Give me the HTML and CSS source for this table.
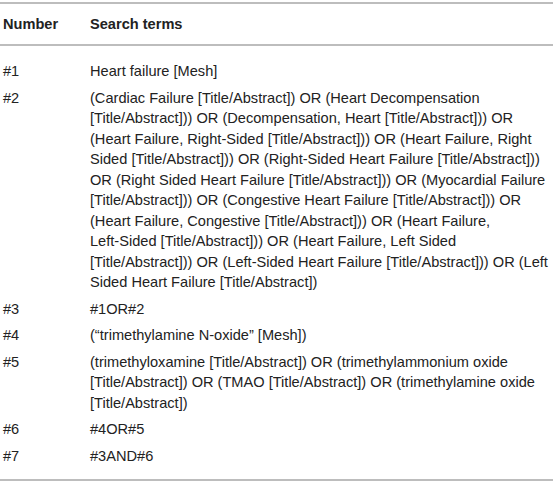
FILE: index.html
```html
<!DOCTYPE html>
<html>
<head>
<meta charset="utf-8">
<link rel="stylesheet" href="styles.css">
</head>
<body>
<div class="wrap">
<table class="terms">
<colgroup><col class="c-num"><col class="c-term"></colgroup>
<thead>
<tr><th>Number</th><th>Search terms</th></tr>
</thead>
<tbody>
<tr class="first"><td>#1</td><td>Heart failure [Mesh]</td></tr>
<tr><td>#2</td><td>(Cardiac Failure [Title/Abstract]) OR (Heart Decompensation<br>[Title/Abstract])) OR (Decompensation, Heart [Title/Abstract])) OR<br>(Heart Failure, Right-Sided [Title/Abstract])) OR (Heart Failure, Right<br>Sided [Title/Abstract])) OR (Right-Sided Heart Failure [Title/Abstract]))<br>OR (Right Sided Heart Failure [Title/Abstract])) OR (Myocardial Failure<br>[Title/Abstract])) OR (Congestive Heart Failure [Title/Abstract])) OR<br>(Heart Failure, Congestive [Title/Abstract])) OR (Heart Failure,<br>Left-Sided [Title/Abstract])) OR (Heart Failure, Left Sided<br>[Title/Abstract])) OR (Left-Sided Heart Failure [Title/Abstract])) OR (Left<br>Sided Heart Failure [Title/Abstract])</td></tr>
<tr><td>#3</td><td>#1OR#2</td></tr>
<tr><td>#4</td><td>(“trimethylamine N-oxide” [Mesh])</td></tr>
<tr><td>#5</td><td>(trimethyloxamine [Title/Abstract]) OR (trimethylammonium oxide<br>[Title/Abstract]) OR (TMAO [Title/Abstract]) OR (trimethylamine oxide<br>[Title/Abstract])</td></tr>
<tr><td>#6</td><td>#4OR#5</td></tr>
<tr class="last"><td>#7</td><td>#3AND#6</td></tr>
</tbody>
</table>
</div>
</body>
</html>
```

FILE: styles.css
```css
html, body {
  margin: 0;
  padding: 0;
  background: #ffffff;
}
.wrap {
  padding-top: 2px;
}
.terms {
  width: 553px;
  border-collapse: collapse;
  table-layout: fixed;
  font-family: "Liberation Sans", Arial, sans-serif;
  font-size: 14.6px;
  color: #222222;
  border-top: 2px solid #bdbdbd;
  border-bottom: 2px solid #bdbdbd;
}
.c-num { width: 87px; }
.terms th {
  text-align: left;
  font-weight: bold;
  line-height: 20px;
  padding: 10px 3px;
  border-bottom: 2px solid #bdbdbd;
}
.terms td {
  vertical-align: top;
  line-height: 20.5px;
  padding: 3px 3px;
  white-space: nowrap;
}
.terms tr.first td { padding-top: 15px; }
.terms tr.last td { padding-bottom: 13px; }
```
